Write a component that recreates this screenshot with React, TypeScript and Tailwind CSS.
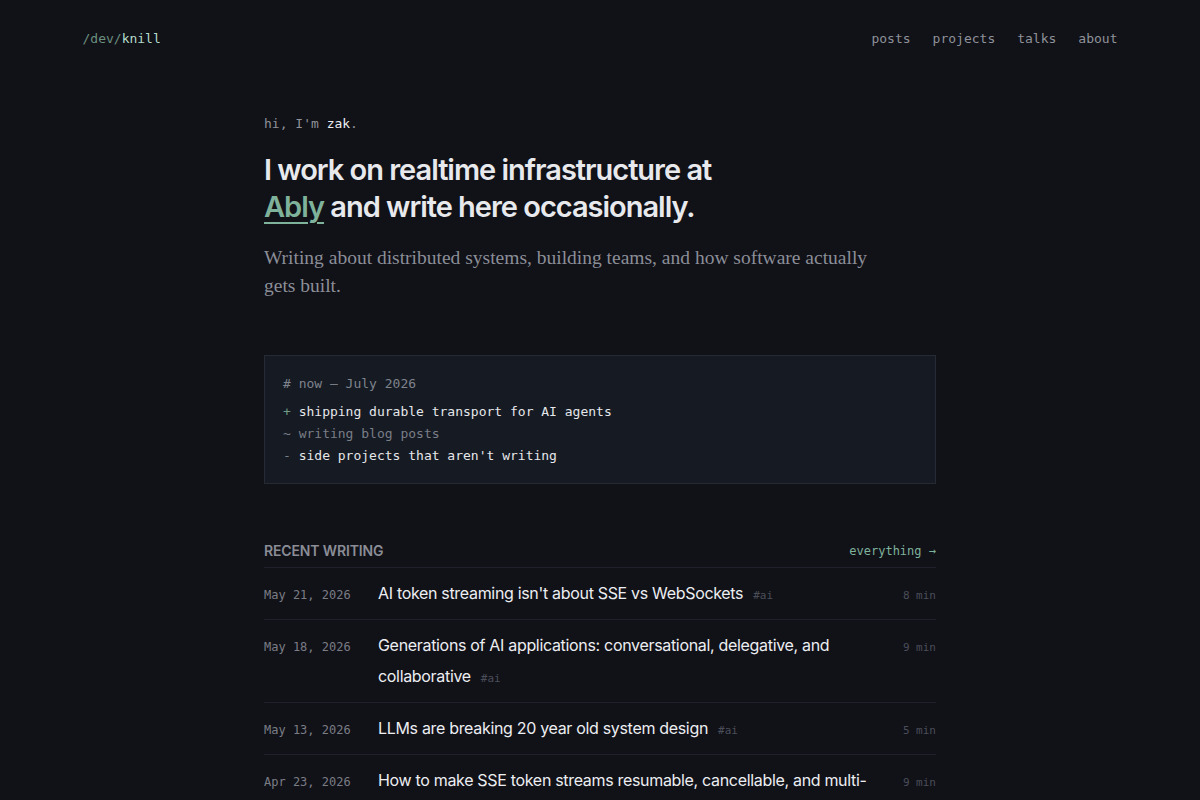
import React from 'react'

const mono = "font-['DejaVu_Sans_Mono','Liberation_Mono',monospace]"
const sans = "font-['Inter','Liberation_Sans',sans-serif]"
const serif = "font-['Liberation_Serif','DejaVu_Serif',serif]"

interface Post {
    date: string
    title: string
    tag: string
    mins: number
}

const posts: Post[] = [
    { date: 'May 21, 2026', title: "AI token streaming isn't about SSE vs WebSockets", tag: '#ai', mins: 8 },
    { date: 'May 18, 2026', title: 'Generations of AI applications: conversational, delegative, and collaborative', tag: '#ai', mins: 9 },
    { date: 'May 13, 2026', title: 'LLMs are breaking 20 year old system design', tag: '#ai', mins: 5 },
    { date: 'Apr 23, 2026', title: 'How to make SSE token streams resumable, cancellable, and multi-device', tag: '#ai', mins: 9 },
]

function Header() {
    return (
        <header className={`${mono} mx-auto flex w-[1035px] items-center justify-between pt-[29px] text-[13px]`}>
            <a className="text-[#6b8f7f]">
                /dev/<span className="text-[#b4dccb]">knill</span>
            </a>
            <nav className="flex gap-[22px] text-[#8e9199]">
                <a>posts</a>
                <a>projects</a>
                <a>talks</a>
                <a>about</a>
            </nav>
        </header>
    )
}

function NowBox() {
    return (
        <div className={`${mono} mt-[55px] border border-[#252a35] bg-[#151a23] px-[18px] pt-[17px] pb-[16px] text-[13px] leading-[22px]`}>
            <div className="mb-[6px] text-[#7f838c]"># now — July 2026</div>
            <div className="text-[#e6e7ea]"><span className="text-[#6f9c86]">+</span> shipping durable transport for AI agents</div>
            <div className="text-[#7a7e87]">~ writing blog posts</div>
            <div className="text-[#e6e7ea]"><span className="text-[#7a7e87]">-</span> side projects that aren't writing</div>
        </div>
    )
}

function PostRow({ post }: { post: Post }) {
    return (
        <div className="flex items-baseline border-b border-[#1f222b] py-[10px]">
            <div className={`${mono} w-[114px] shrink-0 text-[12px] leading-[16px] text-[#7a7d85]`}>{post.date}</div>
            <div className={`${sans} flex-1 pr-[28px] text-[16px] leading-[31px] tracking-[-0.02em] text-[#eceef1]`}>
                {post.title}
                <span className={`${mono} ml-[10px] text-[11px] leading-none tracking-normal text-[#4a4e58]`}>{post.tag}</span>
            </div>
            <div className={`${mono} shrink-0 text-[11px] leading-[16px] text-[#4a4e58]`}>{post.mins} min</div>
        </div>
    )
}

export default function App() {
    return (
        <div className="min-h-screen bg-[#111118] pb-10">
            <Header />
            <main className="mx-auto w-[672px] pt-[65px]">
                <p className={`${mono} text-[13px] text-[#8e9199]`}>
                    hi, I'm <span className="text-[#eceef1]">zak</span>.
                </p>
                <h1 className={`${sans} mt-[18px] text-[29px] leading-[37px] font-semibold tracking-[-0.035em] text-[#e8e9ec]`}>
                    I work on realtime infrastructure at
                    <br />
                    <a className="text-[#7fb29b] underline decoration-[#7fb29b] decoration-[1.5px] underline-offset-[5px]">Ably</a> and write here occasionally.
                </h1>
                <p className={`${serif} mt-[19px] max-w-[620px] text-[19.5px] leading-[28px] text-[#8b8e97]`}>
                    Writing about distributed systems, building teams, and how software actually gets built.
                </p>

                <NowBox />

                <section className="mt-[56px]">
                    <div className="flex items-center justify-between border-b border-[#1f222b] pb-[6px]">
                        <h2 className={`${sans} text-[14px] font-semibold tracking-[-0.01em] text-[#8a8d96]`}>RECENT WRITING</h2>
                        <a className={`${mono} text-[12px] text-[#7fb29b]`}>everything →</a>
                    </div>
                    {posts.map((p) => (
                        <PostRow key={p.date} post={p} />
                    ))}
                </section>
            </main>
        </div>
    )
}
